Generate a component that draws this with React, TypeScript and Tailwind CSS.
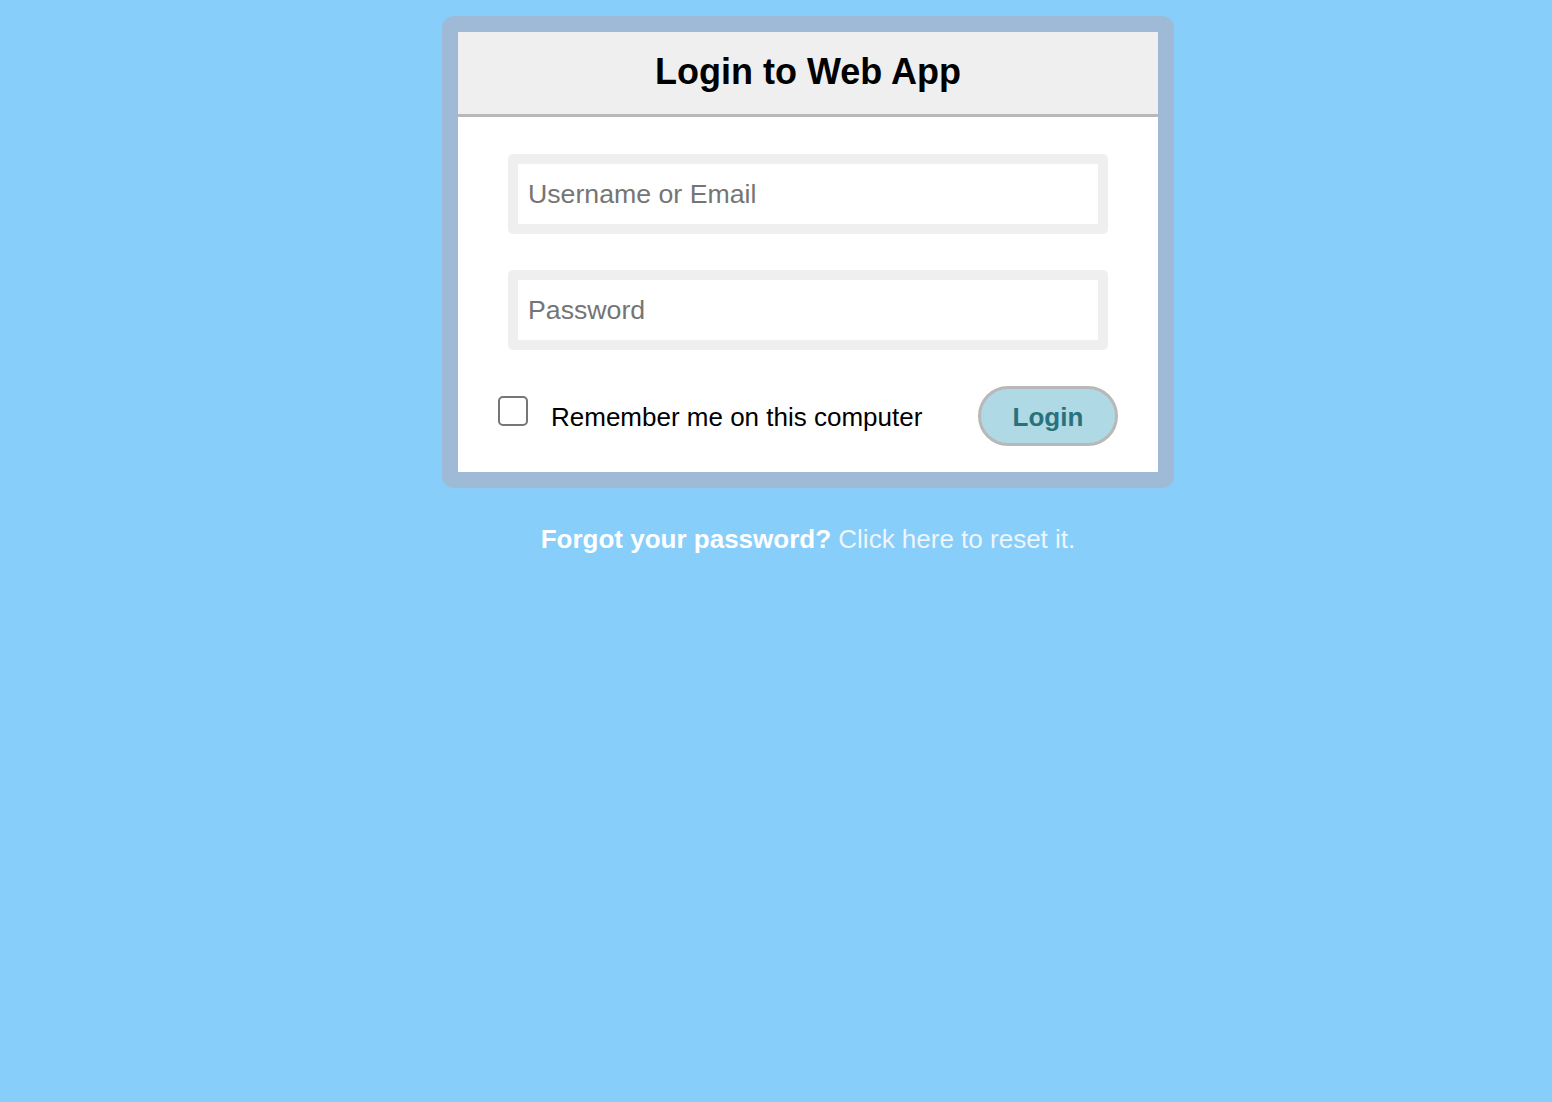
export default function App() {
  return (
    <div
      className="min-h-[1102px] w-full bg-[#87cefa] pt-4"
      style={{ fontFamily: '"Liberation Sans", Arial, sans-serif' }}
    >
      <div className="ml-[442px] w-[732px]">
        <div className="rounded-[12px] bg-[#9ebad6] p-4">
          <div className="bg-white">
            <div className="flex h-[85px] items-center justify-center border-b-[3px] border-[#b8b8b8] bg-[#efefef] pb-[3px]">
              <h1 className="text-[36px] font-bold text-black">Login to Web App</h1>
            </div>
            <form className="flex flex-col px-[40px] pb-[26px] pt-[37px]" onSubmit={(e) => e.preventDefault()}>
              <div className="mx-[10px] flex flex-col gap-[36px]">
                <input
                  type="text"
                  placeholder="Username or Email"
                  className="h-[80px] w-full rounded-[5px] border-[10px] border-[#efefef] bg-white px-[10px] text-[26.7px] text-black outline-none placeholder:text-[#757575]"
                />
                <input
                  type="password"
                  placeholder="Password"
                  className="h-[80px] w-full rounded-[5px] border-[10px] border-[#efefef] bg-white px-[10px] text-[26.7px] text-black outline-none placeholder:text-[#757575]"
                />
              </div>
              <div className="mt-[36px] flex items-center justify-between">
                <label className="flex items-center">
                  <span className="mb-[11px] block h-[30px] w-[30px] rounded-[5px] border-2 border-[#767676] bg-white" />
                  <span className="ml-[23px] pt-[2px] text-[26px] text-black">Remember me on this computer</span>
                </label>
                <button
                  type="submit"
                  className="h-[60px] w-[140px] rounded-full border-[3px] border-[#b8b8b8] bg-[#b0d9e6] pt-[2px] text-[26px] font-bold text-[#28737b]"
                >
                  Login
                </button>
              </div>
            </form>
          </div>
        </div>
        <p className="mt-[32px] text-center text-[26px] text-white">
          <span className="font-bold">Forgot your password?</span>{' '}
          <a href="#" className="text-[#eef5fb]">Click here to reset it.</a>
        </p>
      </div>
    </div>
  );
}
